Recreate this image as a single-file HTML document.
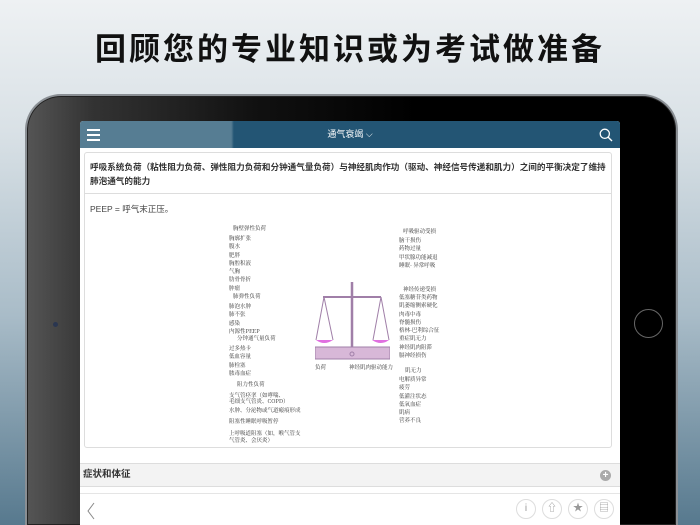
<!DOCTYPE html>
<html><head><meta charset="utf-8"><style>
*{margin:0;padding:0;box-sizing:border-box}
html,body{width:700px;height:525px;overflow:hidden}
body{position:relative;font-family:"Liberation Sans","Noto Sans CJK SC",sans-serif;background:linear-gradient(180deg,#eef1f3 0%,#d9e1e6 25%,#a9bcc8 60%,#57798e 100%)}
.title{position:absolute;top:30px;left:0;width:700px;text-align:center;font-size:31px;font-weight:bold;letter-spacing:3px;color:#111;line-height:40px}
.ipad{position:absolute;left:25px;top:94px;width:653px;height:431px;border-radius:36px 36px 0 0;background:linear-gradient(90deg,#555 0%,#333 10%,#111 35%,#000 60%,#000 100%);border:2px solid #8a8f94;border-bottom:none;box-shadow:inset 0 0 0 1px #222}
.cam{position:absolute;left:53px;top:322px;width:5px;height:5px;border-radius:50%;background:#2a3650}
.home{position:absolute;left:634px;top:309px;width:29px;height:29px;border-radius:50%;border:1.5px solid #666}
.screen{position:absolute;left:80px;top:121px;width:540px;height:404px;background:#fff;border-radius:3px 3px 0 0;overflow:hidden}
.nav{height:27px;background:linear-gradient(90deg,#567d93 0%,#567d93 28%,#235574 28.5%,#235574 100%);position:relative;color:#fff;font-size:9px;text-align:center;line-height:27px}
.ham{position:absolute;left:7px;top:8px;width:13px}
.ham i{display:block;height:2px;background:#fff;margin-bottom:3px}
.card{position:absolute;left:4px;top:31px;width:528px;height:296px;border:1px solid #ddd;border-radius:3px}
.head{height:41px;border-bottom:1px solid #ddd;padding:7px 5px;font-size:8.6px;line-height:14px;color:#333;font-weight:bold;white-space:nowrap}
.p{font-size:8.5px;color:#444;padding:9px 5px}
.fig{position:absolute;left:140px;top:67px;width:248px;height:220px;font-family:"Noto Serif CJK SC",serif;font-size:5.5px;color:#333;line-height:8.3px}
.fig div{position:absolute;white-space:nowrap}
.sec{position:absolute;left:0;top:342px;width:540px;height:24px;background:#f3f3f3;border-top:1px solid #ddd;border-bottom:1px solid #ddd;font-size:9.5px;font-weight:bold;line-height:22px;padding-left:3px;color:#333}
.plus{position:absolute;right:9px;top:6px;width:11px;height:11px;border-radius:50%;background:#aaa;color:#fff;font-size:10px;line-height:11px;text-align:center}
.tb{position:absolute;left:0;top:372px;width:540px;height:32px;border-top:1px solid #e5e5e5}
.ic{position:absolute;top:5px;width:20px;height:20px;border-radius:50%;border:1px solid #ddd;color:#999;font-size:10px;text-align:center;line-height:18px}
</style></head><body>
<div class="title">回顾您的专业知识或为考试做准备</div>
<div class="ipad"></div>
<div class="cam"></div><div class="home"></div>
<div class="screen">
 <div class="nav"><div class="ham"><i></i><i></i><i></i></div>通气衰竭 ⌵
  <svg style="position:absolute;right:7px;top:7px" width="14" height="14" viewBox="0 0 14 14"><circle cx="5.8" cy="5.8" r="4.6" fill="none" stroke="#fff" stroke-width="1.3"/><path d="M9.2 9.2L13 13" stroke="#fff" stroke-width="1.4"/></svg></div>
 <div class="card">
  <div class="head">呼吸系统负荷（粘性阻力负荷、弹性阻力负荷和分钟通气量负荷）与神经肌肉作功（驱动、神经信号传递和肌力）之间的平衡决定了维持<br>肺泡通气的能力</div>
  <div class="p">PEEP = 呼气末正压。</div>
  <div class="fig">
   <div style="left:8px;top:4px">胸壁弹性负荷</div>
   <div style="left:4px;top:14px">胸廓扩张<br>腹水<br>肥胖<br>胸腔积液<br>气胸<br>肋骨骨折<br>肿瘤</div>
   <div style="left:8px;top:72px">肺弹性负荷</div>
   <div style="left:4px;top:82px">肺泡水肿<br>肺不张<br>感染<br>内源性PEEP</div>
   <div style="left:12px;top:114px">分钟通气量负荷</div>
   <div style="left:4px;top:124px">过多热卡<br>低血容量<br>肺栓塞<br>脓毒血症</div>
   <div style="left:12px;top:160px">阻力性负荷</div>
   <div style="left:4px;top:172px;line-height:6px">支气管痉挛（如哮喘、<br>毛细支气管炎、COPD）</div>
   <div style="left:4px;top:186px">水肿、分泌物或气道瘢痕形成</div>
   <div style="left:4px;top:197px">阻塞性睡眠呼吸暂停</div>
   <div style="left:4px;top:210px;line-height:7px">上呼吸道阻塞（如，喉气管支<br>气管炎、会厌炎）</div>
   <div style="left:178px;top:7px">呼吸驱动受损</div>
   <div style="left:174px;top:16px">脑干损伤<br>药物过量<br>甲状腺功能减退<br>睡眠- 异常呼吸</div>
   <div style="left:178px;top:65px">神经传递受损</div>
   <div style="left:174px;top:73px">低塞糖苷类药物<br>肌萎缩侧索硬化<br>肉毒中毒<br>脊髓损伤<br>格林-巴利综合征<br>重症肌无力<br>神经肌肉阻滞<br>膈神经损伤</div>
   <div style="left:180px;top:146px">肌无力</div>
   <div style="left:174px;top:155px">电解质异常<br>疲劳<br>低灌注状态<br>低氧血症<br>肌病<br>营养不良</div>
   <div style="left:90px;top:143px">负荷</div>
   <div style="left:124px;top:143px">神经肌肉驱动能力</div>
   <svg style="position:absolute;left:90px;top:60px" width="75" height="80" viewBox="0 0 75 80">
    <g fill="none" stroke="#a07fa8" stroke-width="1"><line x1="37" y1="2" x2="37" y2="68" stroke-width="2.5"/><line x1="8" y1="17" x2="66" y2="17" stroke-width="2"/><path d="M9 17L1 60M9 17L18 60M66 17L58 60M66 17L74 60"/></g>
    <path d="M1 60Q9 66 18 60Z M57 60Q66 66 74 60Z" fill="#e070e0"/>
    <rect x="0" y="67" width="75" height="12" fill="#d8b8d8" stroke="#a07fa8"/><circle cx="37" cy="74" r="2" fill="none" stroke="#a07fa8"/>
   </svg>
  </div>
 </div>
 <div class="sec">症状和体征<div class="plus">+</div></div>
 <div class="tb">
  <svg style="position:absolute;left:6px;top:8px" width="10" height="18"><path d="M8 1L2 9L8 17" fill="none" stroke="#888" stroke-width="1"/></svg>
  <div class="ic" style="left:436px">i</div>
  <div class="ic" style="left:462px">⇧</div>
  <div class="ic" style="left:488px">★</div>
  <div class="ic" style="left:514px">▤</div>
 </div>
</div>
</body></html>
